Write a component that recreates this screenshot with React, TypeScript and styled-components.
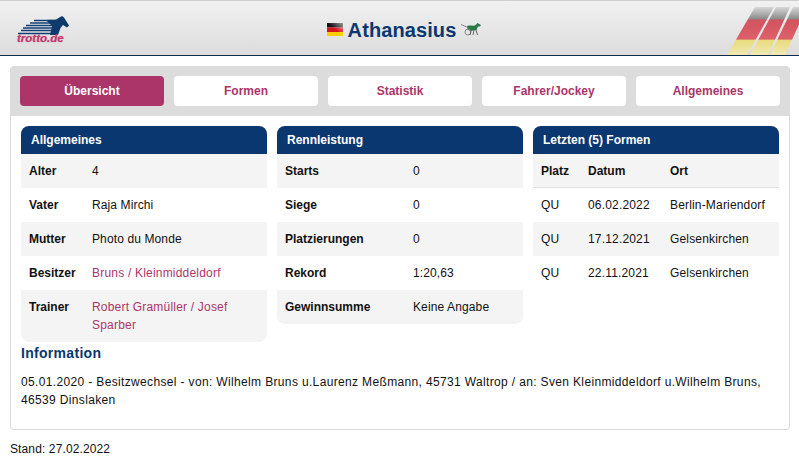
import React from "react";
import styled, { createGlobalStyle } from "styled-components";

const NAVY = "#0b3770";
const PINK = "#ab3568";

const GlobalStyle = createGlobalStyle`
  html, body {
    margin: 0;
    padding: 0;
    background: #fff;
    color: #111;
    font-family: "Liberation Sans", Arial, sans-serif;
    font-size: 12px;
    overflow: hidden;
  }
`;

const Header = styled.header`
  position: relative;
  display: flex;
  align-items: center;
  justify-content: center;
  height: 54px;
  border-top: 1px solid #cfcfcf;
  border-bottom: 1px solid #0b2a4a;
  background: linear-gradient(#f1f1f1, #dcdcdc);
`;

const LogoWrap = styled.div`
  position: absolute;
  left: 16px;
  top: 11px;
  width: 56px;
  height: 36px;
`;

const LogoText = styled.span`
  position: absolute;
  left: 1px;
  bottom: 4px;
  font-size: 11.5px;
  line-height: 12px;
  font-weight: bold;
  font-style: italic;
  color: #c0396f;
  text-shadow: 0 0 1px rgba(192, 57, 111, 0.6);
`;

const Stripes = styled.svg`
  position: absolute;
  right: 0;
  top: 0;
`;

const Title = styled.h1`
  display: flex;
  align-items: center;
  gap: 5px;
  margin: 3px 0 0 9px;
  font-size: 20px;
  line-height: 24px;
  font-weight: bold;
  letter-spacing: 0.1px;
  color: ${NAVY};
`;

const Panel = styled.main`
  margin: 10px 9px 0 10px;
  height: 363px;
  border: 1px solid #dcdcdc;
  border-top: 0;
  border-radius: 4px;
  overflow: hidden;
`;

const TabBar = styled.nav`
  display: grid;
  grid-template-columns: repeat(5, 144px);
  gap: 10px;
  padding: 10px 9px;
  height: 30px;
  background: #dcdcdc;
`;

const Tab = styled.a<{ $active?: boolean }>`
  display: flex;
  align-items: center;
  justify-content: center;
  height: 30px;
  border-radius: 4px;
  font-weight: bold;
  background: ${(p) => (p.$active ? PINK : "#fff")};
  color: ${(p) => (p.$active ? "#fff" : PINK)};
`;

const Columns = styled.div`
  display: grid;
  grid-template-columns: repeat(3, 246px);
  gap: 10px;
  align-items: start;
  padding: 10px 10px 0;
`;

const Card = styled.section`
  border-radius: 0 0 8px 8px;
  overflow: hidden;
`;

const CardHead = styled.h2`
  margin: 0;
  height: 28px;
  padding: 0 10px;
  border-radius: 8px 8px 0 0;
  background: ${NAVY};
  color: #fff;
  font-size: 12px;
  line-height: 28px;
  font-weight: bold;
`;

const Row = styled.div<{ $col: number }>`
  display: grid;
  grid-template-columns: ${(p) => p.$col}px 1fr;
  padding: 8px;
  line-height: 18px;
  background: #fff;
  &:nth-of-type(odd) {
    background: #f4f4f4;
  }
`;

const Label = styled.b`
  color: #111;
`;

const Value = styled.span`
  letter-spacing: 0.12px;
`;

const Linked = styled.span`
  color: ${PINK};
  letter-spacing: 0.2px;
`;

const FormRow = styled.div<{ $head?: boolean }>`
  display: grid;
  grid-template-columns: 47px 82px 1fr;
  padding: 8px;
  line-height: 18px;
  font-weight: ${(p) => (p.$head ? "bold" : "normal")};
  letter-spacing: ${(p) => (p.$head ? "0" : "0.17px")};
  background: #fff;
  &:nth-of-type(odd) {
    background: #f4f4f4;
  }
  ${(p) => p.$head && "height: 17px; border-bottom: 1px solid #e4e4e4;"}
`;

const Info = styled.section`
  padding: 0 10px;
`;

const InfoHead = styled.h3`
  margin: 2px 0 0;
  font-size: 14px;
  line-height: 18px;
  letter-spacing: 0.3px;
  font-weight: bold;
  color: ${NAVY};
`;

const InfoText = styled.p`
  margin: 11px 0 0;
  line-height: 18px;
  letter-spacing: 0.35px;
`;

const Footer = styled.footer`
  margin: 10px 10px 0;
  line-height: 18px;
  letter-spacing: 0.12px;
`;

const Flag = () => (
  <svg width="16" height="13" viewBox="0 0 16 13">
    <defs>
      <linearGradient id="flagShine" x1="0" x2="1" y1="1" y2="0">
        <stop offset="0.5" stopColor="#fff" stopOpacity="0" />
        <stop offset="1" stopColor="#fff" stopOpacity="0.6" />
      </linearGradient>
    </defs>
    <rect width="16" height="4.5" fill="#111" />
    <rect y="4.5" width="16" height="4.5" fill="#d8121c" />
    <rect y="9" width="16" height="4" fill="#fc0" />
    <rect width="16" height="13" fill="url(#flagShine)" />
  </svg>
);

const Sulky = () => (
  <svg width="20" height="13" viewBox="0 0 20 13">
    <path d="M6 3 C9 2 12 3 14 2.5 L16.5 0 L20 2 L19 3.5 L17 3.5 L15.5 7 L9 8 L6.5 6.5 Z" fill="#2a7a48" />
    <path d="M0 1.5 L7 4.5" stroke="#888" strokeWidth="1" />
    <circle cx="7" cy="9" r="3" fill="none" stroke="#8a8a8a" strokeWidth="1" />
    <path d="M10 7 L9 12 M13 7 L12 12 M15 7 L16.5 12" stroke="#666" strokeWidth="1" />
  </svg>
);

const Logo = () => (
  <LogoWrap>
    <svg width="56" height="24" viewBox="0 0 56 24">
      <path
        d="M30 8 L40 7.5 L46 4 L48 5.5 L53 13.5 L51 15.5 L47 13 L44.5 16 L42 23 L34 23 L36 14 Z"
        fill="#0e3a6c"
      />
      <path
        d="M18 8.5 H36 M14 11 H36 M10 13.5 H36 M7 16 H36 M5 18.5 H36 M2 21.5 H36"
        stroke="#123f74"
        strokeWidth="1.4"
      />
    </svg>
    <LogoText>trotto.de</LogoText>
  </LogoWrap>
);

const FlagStripes = () => (
  <Stripes width="72" height="54" viewBox="0 0 72 54">
    <defs>
      <linearGradient id="bandFade" gradientUnits="userSpaceOnUse" x1="0" x2="0" y1="5" y2="54">
        <stop offset="0" stopColor="#dddddd" />
        <stop offset="0.27" stopColor="#8a8a8a" />
        <stop offset="0.28" stopColor="#d2545f" />
        <stop offset="0.68" stopColor="#dc5f69" />
        <stop offset="0.69" stopColor="#e8da7c" />
        <stop offset="1" stopColor="#efe9b4" />
      </linearGradient>
    </defs>
    <path d="M28 6 H47 L20 54 H0 Z" fill="url(#bandFade)" />
    <path d="M49 6 H63 L41 54 H23 Z" fill="url(#bandFade)" />
    <path d="M66 6 H72 V23.5 L58 54 H43 Z" fill="url(#bandFade)" />
  </Stripes>
);

const tabs = ["Übersicht", "Formen", "Statistik", "Fahrer/Jockey", "Allgemeines"];

const general: [string, string, boolean][] = [
  ["Alter", "4", false],
  ["Vater", "Raja Mirchi", false],
  ["Mutter", "Photo du Monde", false],
  ["Besitzer", "Bruns / Kleinmiddeldorf", true],
  ["Trainer", "Robert Gramüller / Josef Sparber", true],
];

const racing = [
  ["Starts", "0"],
  ["Siege", "0"],
  ["Platzierungen", "0"],
  ["Rekord", "1:20,63"],
  ["Gewinnsumme", "Keine Angabe"],
];

const forms = [
  ["QU", "06.02.2022", "Berlin-Mariendorf"],
  ["QU", "17.12.2021", "Gelsenkirchen"],
  ["QU", "22.11.2021", "Gelsenkirchen"],
];

const App = () => {
  return (
    <>
      <GlobalStyle />
      <Header>
        <Logo />
        <Title>
          <Flag />
          Athanasius
          <Sulky />
        </Title>
        <FlagStripes />
      </Header>

      <Panel>
        <TabBar>
          {tabs.map((t, i) => (
            <Tab key={t} $active={i === 0}>
              {t}
            </Tab>
          ))}
        </TabBar>

        <Columns>
          <Card>
            <CardHead>Allgemeines</CardHead>
            <div>
              {general.map(([k, v, link]) => (
                <Row key={k} $col={63}>
                  <Label>{k}</Label>
                  {link ? <Linked>{v}</Linked> : <Value>{v}</Value>}
                </Row>
              ))}
            </div>
          </Card>

          <Card>
            <CardHead>Rennleistung</CardHead>
            <div>
              {racing.map(([k, v]) => (
                <Row key={k} $col={128}>
                  <Label>{k}</Label>
                  <Value>{v}</Value>
                </Row>
              ))}
            </div>
          </Card>

          <Card>
            <CardHead>Letzten (5) Formen</CardHead>
            <div>
              <FormRow $head>
                <span>Platz</span>
                <span>Datum</span>
                <span>Ort</span>
              </FormRow>
              {forms.map(([a, b, c]) => (
                <FormRow key={b}>
                  <span>{a}</span>
                  <span>{b}</span>
                  <span>{c}</span>
                </FormRow>
              ))}
            </div>
          </Card>
        </Columns>

        <Info>
          <InfoHead>Information</InfoHead>
          <InfoText>
            05.01.2020 - Besitzwechsel - von: Wilhelm Bruns u.Laurenz Meßmann, 45731 Waltrop / an: Sven
            Kleinmiddeldorf u.Wilhelm Bruns, 46539 Dinslaken
          </InfoText>
        </Info>
      </Panel>

      <Footer>Stand: 27.02.2022</Footer>
    </>
  );
};

export default App;
